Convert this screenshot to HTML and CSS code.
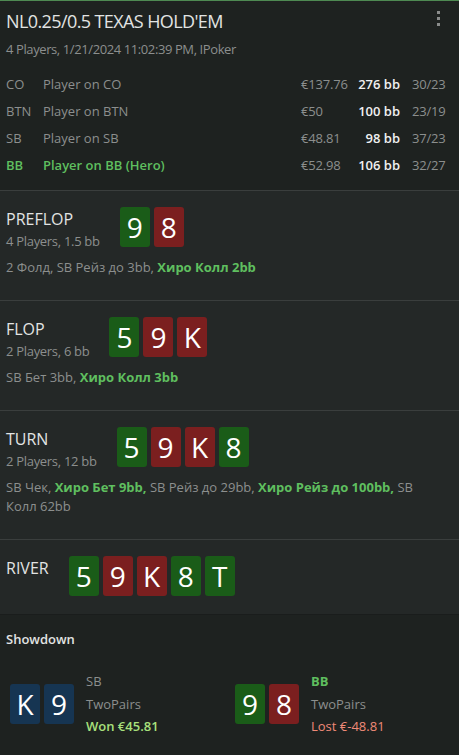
FILE: index.html
```html
<!DOCTYPE html>
<html lang="ru">
<head>
    <meta charset="UTF-8">
    <meta name="viewport" content="width=device-width, initial-scale=1.0">
    <title>Hand</title>
    <link rel="stylesheet" href="styles.css">
</head>
<body>
    <div class="hand">
        <div class="header">
            <div class="title-row">
                <div class="title">NL0.25/0.5 TEXAS HOLD'EM</div>
                <div class="menu"><span></span><span></span><span></span></div>
            </div>
            <div class="subtitle">4 Players, 1/21/2024 11:02:39 PM, IPoker</div>
            <div class="players">
                <div class="player">
                    <span class="pos">CO</span>
                    <span class="name">Player on CO</span>
                    <span class="money">€137.76</span>
                    <span class="bb">276 bb</span>
                    <span class="ratio">30/23</span>
                </div>
                <div class="player">
                    <span class="pos">BTN</span>
                    <span class="name">Player on BTN</span>
                    <span class="money">€50</span>
                    <span class="bb">100 bb</span>
                    <span class="ratio">23/19</span>
                </div>
                <div class="player">
                    <span class="pos">SB</span>
                    <span class="name">Player on SB</span>
                    <span class="money">€48.81</span>
                    <span class="bb">98 bb</span>
                    <span class="ratio">37/23</span>
                </div>
                <div class="player hero">
                    <span class="pos">BB</span>
                    <span class="name">Player on BB (Hero)</span>
                    <span class="money">€52.98</span>
                    <span class="bb">106 bb</span>
                    <span class="ratio">32/27</span>
                </div>
            </div>
        </div>

        <div class="street">
            <div class="street-head">
                <div class="street-info">
                    <div class="street-name">PREFLOP</div>
                    <div class="street-sub">4 Players, 1.5 bb</div>
                </div>
                <div class="cards">
                    <div class="card green">9</div>
                    <div class="card red">8</div>
                </div>
            </div>
            <div class="actions">2 Фолд, SB Рейз до 3bb, <b>Хиро Колл 2bb</b></div>
        </div>

        <div class="street">
            <div class="street-head">
                <div class="street-info">
                    <div class="street-name">FLOP</div>
                    <div class="street-sub">2 Players, 6 bb</div>
                </div>
                <div class="cards">
                    <div class="card green">5</div>
                    <div class="card red">9</div>
                    <div class="card red">K</div>
                </div>
            </div>
            <div class="actions">SB Бет 3bb, <b>Хиро Колл 3bb</b></div>
        </div>

        <div class="street">
            <div class="street-head">
                <div class="street-info">
                    <div class="street-name">TURN</div>
                    <div class="street-sub">2 Players, 12 bb</div>
                </div>
                <div class="cards">
                    <div class="card green">5</div>
                    <div class="card red">9</div>
                    <div class="card red">K</div>
                    <div class="card green">8</div>
                </div>
            </div>
            <div class="actions">SB Чек, <b>Хиро Бет 9bb,</b> SB Рейз до 29bb, <b>Хиро Рейз до 100bb,</b> SB Колл 62bb</div>
        </div>

        <div class="street river">
            <div class="street-head">
                <div class="street-info">
                    <div class="street-name">RIVER</div>
                </div>
                <div class="cards">
                    <div class="card green">5</div>
                    <div class="card red">9</div>
                    <div class="card red">K</div>
                    <div class="card green">8</div>
                    <div class="card green">T</div>
                </div>
            </div>
        </div>

        <div class="showdown">
            <div class="showdown-title">Showdown</div>
            <div class="results">
                <div class="result">
                    <div class="cards">
                        <div class="card blue">K</div>
                        <div class="card blue">9</div>
                    </div>
                    <div class="result-info">
                        <div>SB</div>
                        <div>TwoPairs</div>
                        <div class="won">Won €45.81</div>
                    </div>
                </div>
                <div class="result">
                    <div class="cards">
                        <div class="card green">9</div>
                        <div class="card red">8</div>
                    </div>
                    <div class="result-info">
                        <div class="hero-pos">BB</div>
                        <div>TwoPairs</div>
                        <div class="lost">Lost €-48.81</div>
                    </div>
                </div>
            </div>
        </div>
    </div>
</body>
</html>
```

FILE: styles.css
```css
body {
    margin: 0;
    background-color: #1e2220;
    font-family: "Open Sans", "Noto Sans", sans-serif;
    font-size: 13px;
    color: #8c8f8e;
}
.hand {
    border-top: 1px solid #4e8a52;
}
.header {
    padding: 8px 6px 12px;
}
.title-row {
    display: flex;
    justify-content: space-between;
    align-items: flex-start;
}
.title {
    font-size: 18px;
    line-height: 24px;
    letter-spacing: -0.6px;
    color: #e2e4e3;
}
.menu {
    display: flex;
    flex-direction: column;
    gap: 3px;
    padding: 2px 13px 0 0;
}
.menu span {
    width: 3px;
    height: 3px;
    background-color: #8a8c8b;
}
.subtitle {
    margin-top: 7px;
    line-height: 18px;
    letter-spacing: -0.4px;
}
.players {
    margin-top: 12px;
}
.player {
    display: grid;
    grid-template-columns: 37px 1fr 52px 47px 53px;
    height: 27px;
    align-items: center;
}
.player .money,
.player .ratio {
    letter-spacing: -0.2px;
}
.player .bb {
    text-align: right;
    font-weight: 600;
    color: #f0f0f0;
}
.player .ratio {
    padding-left: 12px;
}
.player.hero .pos,
.player.hero .name {
    color: #5fbf5f;
    font-weight: 600;
}
.street {
    background-color: #242827;
    border-top: 1px solid #3a3e3d;
    padding: 16px 6px 18px;
}
.street-head {
    display: flex;
    gap: 20px;
}
.street-name {
    font-size: 16px;
    line-height: 24px;
    color: #e2e4e3;
}
.street-sub {
    line-height: 20px;
    letter-spacing: -0.3px;
}
.actions {
    max-width: 420px;
    margin: 7px 0 5px;
    line-height: 19px;
}
.actions b {
    color: #5fbf5f;
    font-weight: 700;
}
.cards {
    display: flex;
    gap: 4px;
}
.card {
    width: 30px;
    height: 40px;
    border-radius: 3px;
    color: #ffffff;
    font-size: 28px;
    line-height: 40px;
    text-align: center;
}
.card.green {
    background-color: #1a5c18;
}
.card.red {
    background-color: #7b1f1f;
}
.card.blue {
    background-color: #163552;
}
.showdown {
    border-top: 1px solid #1a1d1c;
    padding: 15px 0 17px;
}
.showdown-title {
    padding-left: 6px;
    font-weight: 600;
    line-height: 18px;
    color: #e2e4e3;
}
.results {
    display: grid;
    grid-template-columns: 225px 1fr;
    padding: 22px 0 0 10px;
}
.result {
    display: flex;
    align-items: center;
    gap: 12px;
}
.result-info div {
    line-height: 22.5px;
}
.result-info .hero-pos {
    color: #5fbf5f;
    font-weight: 700;
}
.result-info .won {
    color: #a8e07c;
    font-weight: 600;
}
.result-info .lost {
    color: #f08a78;
}
```
